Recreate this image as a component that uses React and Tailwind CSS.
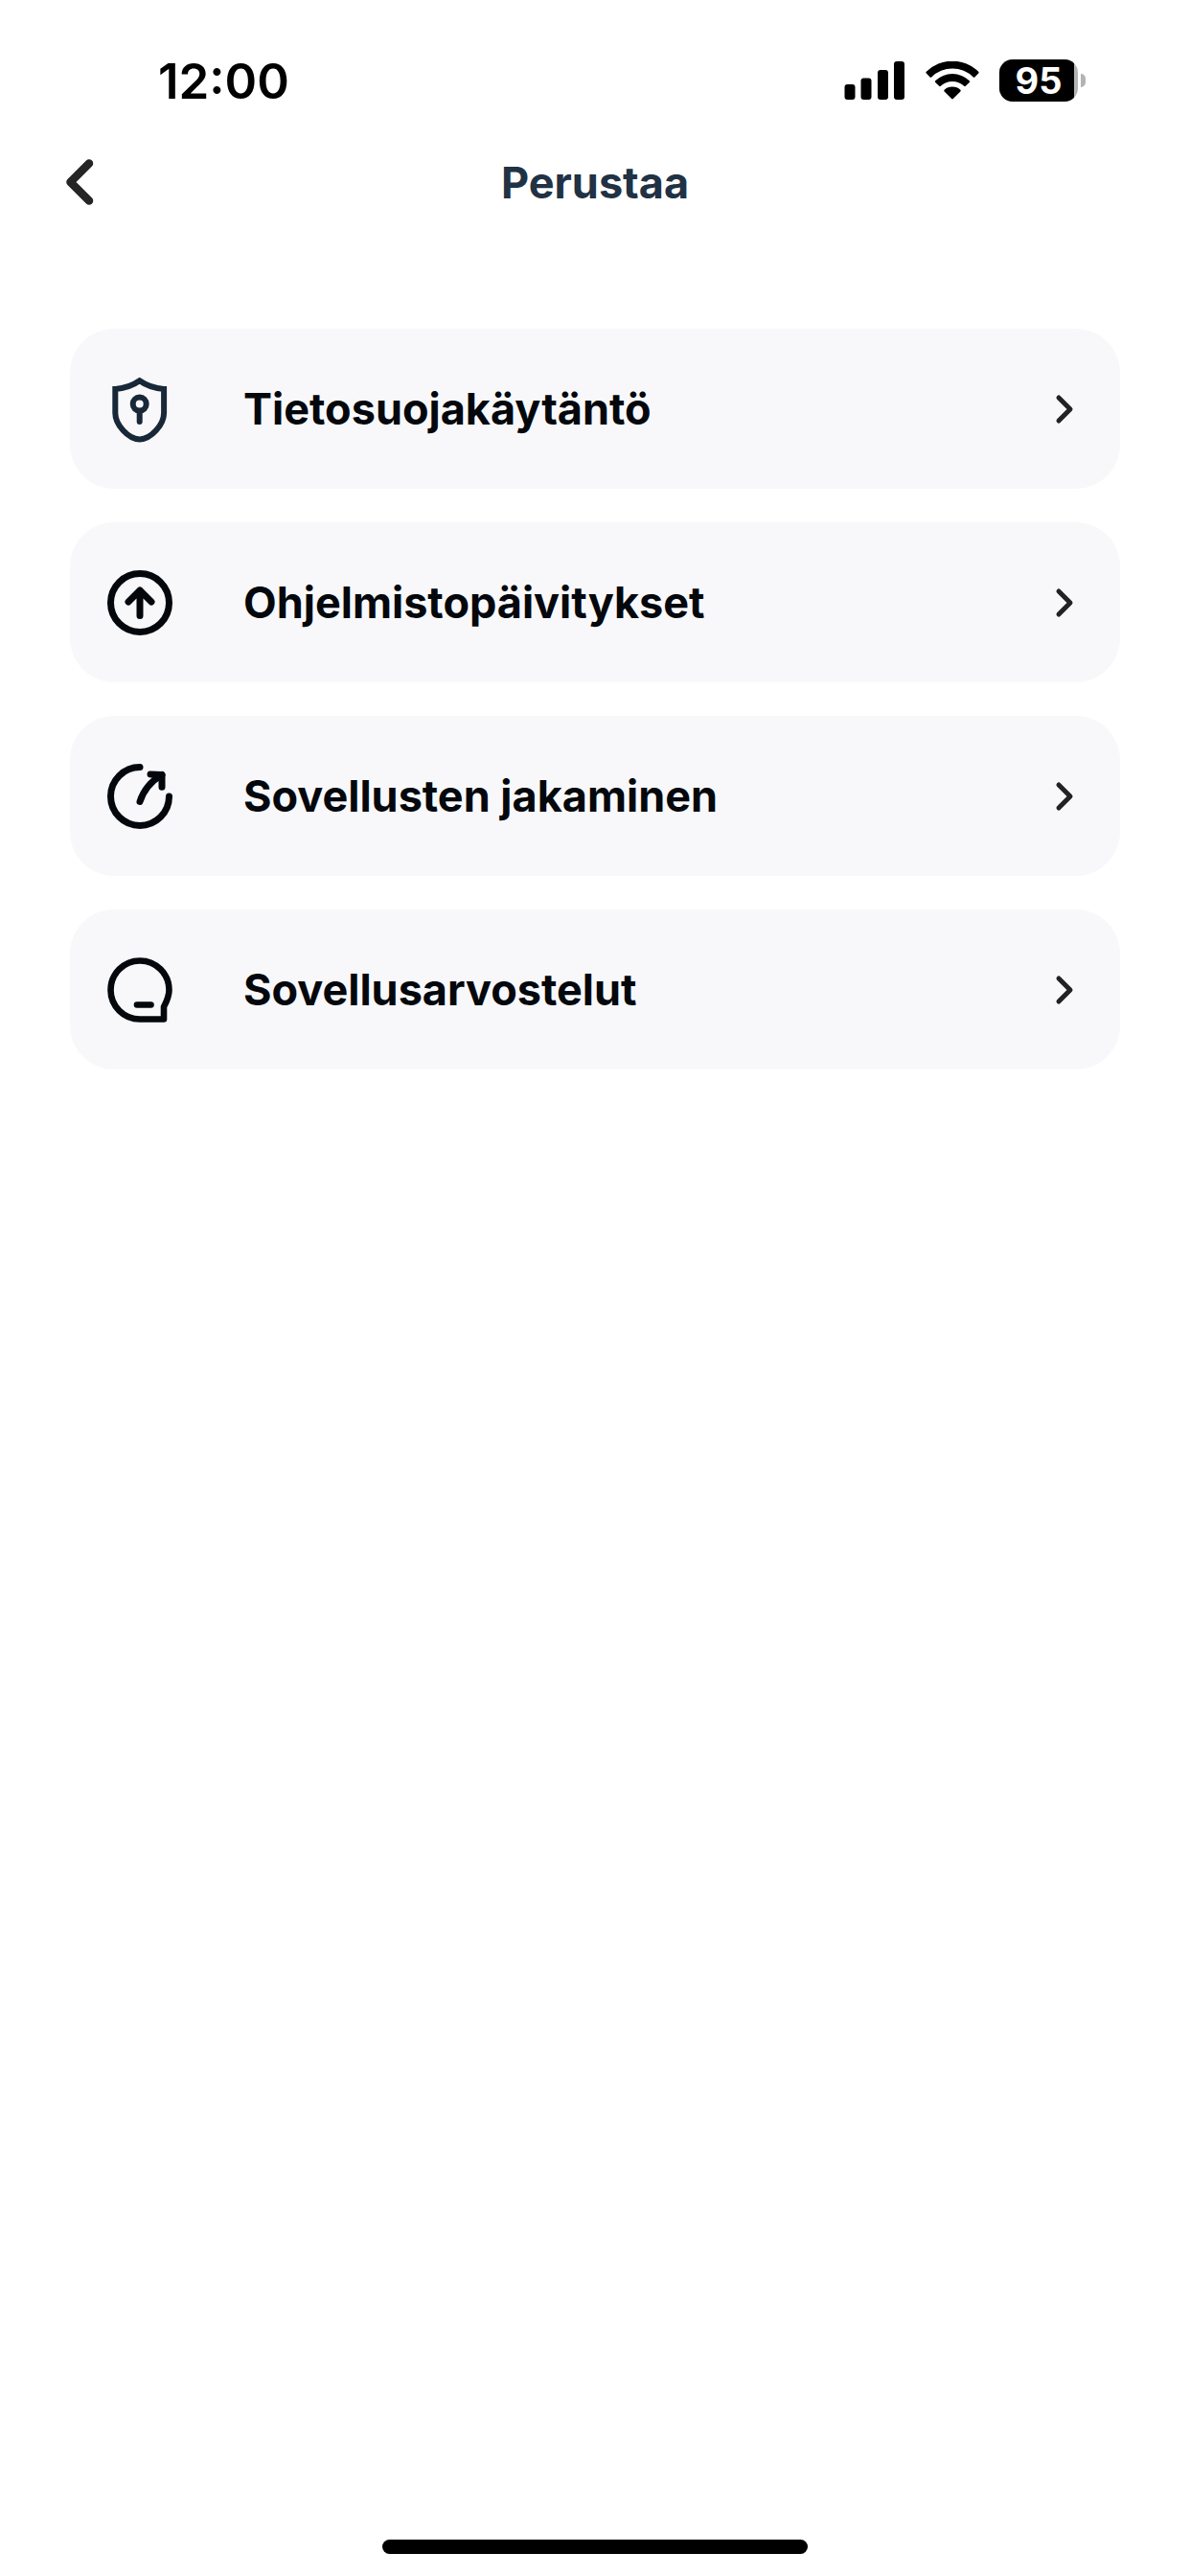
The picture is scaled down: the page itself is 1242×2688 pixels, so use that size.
function ShieldIcon() {
  return (
    <svg className="size-[68px] shrink-0" viewBox="0 0 68 68" fill="none" stroke="#182838" strokeWidth="6" overflow="visible" aria-hidden="true">
      <path d="M33.7 4.300C27 9 18 12.400 8.300 12.900V38C8.300 50 21.500 65 33.700 65.600C45.900 65 59.100 50 59.100 38V12.900C49.400 12.400 40.400 9 33.700 4.300Z" />
      <circle cx="33.7" cy="28.600" r="7" />
      <path d="M33.7 36V47" strokeLinecap="round" />
    </svg>
  );
}

function UpdateIcon() {
  return (
    <svg className="size-[68px] shrink-0" viewBox="0 0 68 68" fill="none" stroke="#04080d" strokeWidth="7" strokeLinecap="round" strokeLinejoin="round" aria-hidden="true">
      <circle cx="34" cy="34" r="30.500" />
      <path d="M34 47.500V21M22 33L34 21L46 33" />
    </svg>
  );
}

function ShareIcon() {
  return (
    <svg className="size-[68px] shrink-0" viewBox="0 0 68 68" fill="none" stroke="#04080d" strokeWidth="7" strokeLinecap="round" strokeLinejoin="round" aria-hidden="true">
      <path d="M34 3.500A30.500 30.500 0 1 0 64.500 34" />
      <path d="M34 39.500C37.500 28.500 45 18.500 57 11.500" />
      <path d="M45 11L57 11.500V24.300" />
    </svg>
  );
}

function ReviewIcon() {
  return (
    <svg className="size-[68px] shrink-0" viewBox="0 0 68 68" fill="none" stroke="#04080d" strokeWidth="6.600" strokeLinejoin="round" aria-hidden="true">
      <path d="M34 64.500A30.500 30.500 0 1 1 64.500 34C64.500 40.500 62 46 59 51.500V64.500Z" />
      <path d="M31 49.500H45.500" strokeLinecap="round" />
    </svg>
  );
}

function ChevronIcon() {
  return (
    <svg className="h-9 w-6 shrink-0" viewBox="0 0 24 36" fill="none" stroke="#222" strokeWidth="5" strokeLinecap="round" strokeLinejoin="round" aria-hidden="true">
      <path d="M5 6L17 18L5 30" />
    </svg>
  );
}

function StatusBar() {
  return (
    <header className="flex h-[116px] items-center justify-between pt-[52px] pr-[109px] pl-[165px] text-black">
      <time className="text-[51px] leading-none font-semibold">12:00</time>
      <div className="flex items-center">
        <svg className="mr-[21px] h-10 w-16" viewBox="0 0 64 40" fill="currentColor" aria-label="Signal">
          <rect x="0.500" y="24" width="11" height="16" rx="3" />
          <rect x="17.500" y="17.500" width="11" height="22.500" rx="3" />
          <rect x="35" y="9" width="11" height="31" rx="3" />
          <rect x="52" y="0" width="11" height="40" rx="3" />
        </svg>
        <svg className="mr-[21px] h-10 w-14" viewBox="0 0 56 40" fill="currentColor" aria-label="Wi-Fi">
          <path d="M0.800 10.800Q0 11.700 0.800 12.600L4.600 16.400Q5.400 17.100 6.200 16.400A31 31 0 0 1 49.800 16.400Q50.600 17.100 51.400 16.400L55.200 12.600Q56 11.700 55.200 10.800A38.800 38.800 0 0 0 0.800 10.800Z" />
          <path d="M10.200 20.300Q9.500 21.100 10.200 21.900L14.200 25.800Q15 26.500 15.800 25.800A17.800 17.800 0 0 1 40.200 25.800Q41 26.500 41.800 25.800L45.800 21.900Q46.500 21.100 45.800 20.300A25.500 25.500 0 0 0 10.200 20.300Z" />
          <path d="M19.600 29.800Q18.900 30.600 19.600 31.400L27.200 39Q28 39.800 28.800 39L36.400 31.400Q37.100 30.600 36.400 29.800A12.300 12.300 0 0 0 19.600 29.800Z" />
        </svg>
        <div className="flex items-center gap-[3px]">
          <div className="flex overflow-hidden rounded-[14px] bg-[#b3b3b3] pr-1">
            <span className="flex h-11 w-[78px] items-center justify-center bg-black pl-1 text-[38px] leading-none font-bold text-white">
              95
            </span>
          </div>
          <span className="h-[14px] w-[5px] rounded-r-full bg-[#b3b3b3]" />
        </div>
      </div>
    </header>
  );
}

const rows = [
  { label: "Tietosuojakäytäntö", Icon: ShieldIcon },
  { label: "Ohjelmistopäivitykset", Icon: UpdateIcon },
  { label: "Sovellusten jakaminen", Icon: ShareIcon },
  { label: "Sovellusarvostelut", Icon: ReviewIcon },
];

export default function App() {
  return (
    <div className="flex min-h-screen flex-col bg-white font-['Inter',sans-serif]">
      <StatusBar />
      <nav className="grid h-[148px] grid-cols-[1fr_auto_1fr] items-center px-16">
        <button type="button" aria-label="Takaisin" className="justify-self-start">
          <svg className="h-[52px] w-10" viewBox="0 0 40 52" fill="none" stroke="#252525" strokeWidth="8.500" strokeLinecap="round" strokeLinejoin="round" aria-hidden="true">
            <path d="M29 6.500L9.500 26L29 45.500" />
          </svg>
        </button>
        <h1 className="text-[45px] leading-none font-bold text-[#203244]">Perustaa</h1>
      </nav>
      <main className="px-[73px] pt-[79px]">
        <ul className="flex flex-col gap-[35px]">
          {rows.map(({ label, Icon }) => (
            <li key={label}>
              <button type="button" className="flex h-[167px] w-full items-center rounded-[46px] bg-[#f8f8fa] pr-[45px] pl-[39px] text-left">
                <Icon />
                <span className="ml-[74px] grow text-[45px] leading-none font-bold text-[#04080d]">{label}</span>
                <ChevronIcon />
              </button>
            </li>
          ))}
        </ul>
      </main>
      <div className="mx-auto mt-auto mb-[23px] h-[15px] w-[444px] rounded-full bg-black" />
    </div>
  );
}
